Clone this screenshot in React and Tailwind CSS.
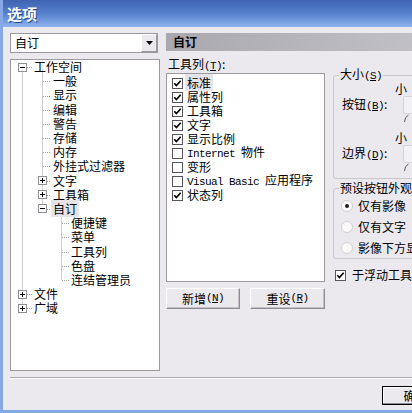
import React from "react";

const cjk = "font-['Noto_Sans_CJK_SC','Liberation_Sans',sans-serif]";
const mono = "font-['Liberation_Mono','Noto_Sans_CJK_SC',monospace] text-[11px] tracking-[-0.6px]";

function Key({ k }) {
    return <span className={mono}>(<span className="underline">{k}</span>)</span>
}

function Check({ on }) {
    return (
        <svg width="11" height="11" viewBox="0 0 11 11" className="shrink-0">
            <rect x="0.5" y="0.5" width="10" height="10" fill="#fff" stroke="#55555b" />
            {on && <path d="M2.3 5.2 L4.4 7.5 L8.7 2.8" fill="none" stroke="#000" strokeWidth="1.7" />}
        </svg>
    )
}

function Radio({ on }) {
    return (
        <svg width="12" height="12" viewBox="0 0 12 12" className="shrink-0">
            <circle cx="6" cy="6" r="5.5" fill="#fafafa" stroke="#cfced3" />
            {on && <circle cx="6" cy="6" r="2" fill="#1e1e1e" />}
        </svg>
    )
}

function Expander({ open }) {
    return (
        <svg width="9" height="9" viewBox="0 0 9 9" className="shrink-0">
            <rect x="0.5" y="0.5" width="8" height="8" fill="#fff" stroke="#8e8f94" />
            <path d="M2 4.5h5" stroke="#000" />
            {!open && <path d="M4.5 2v5" stroke="#000" />}
        </svg>
    )
}

const treeRows = [
    { lv: 0, ex: "open", t: "工作空间" },
    { lv: 1, t: "一般" },
    { lv: 1, t: "显示" },
    { lv: 1, t: "编辑" },
    { lv: 1, t: "警告" },
    { lv: 1, t: "存储" },
    { lv: 1, t: "内存" },
    { lv: 1, t: "外挂式过滤器" },
    { lv: 1, ex: "closed", t: "文字" },
    { lv: 1, ex: "closed", t: "工具箱" },
    { lv: 1, ex: "open", t: "自订", sel: true },
    { lv: 2, t: "便捷键" },
    { lv: 2, t: "菜单" },
    { lv: 2, t: "工具列" },
    { lv: 2, t: "色盘" },
    { lv: 2, t: "连结管理员" },
    { lv: 0, ex: "closed", t: "文件" },
    { lv: 0, ex: "closed", t: "广域" },
]

const ROW = 14.2
const cy = (i) => Math.round(7.1 + ROW * i) + 0.5

// dotted connector lines of the tree
function TreeLines() {
    const dot = { stroke: "#9d9da3", strokeDasharray: "1 1" }
    return (
        <svg className="absolute inset-0 pointer-events-none" width="150" height="312">
            <line x1="11.5" y1={cy(0) + 5} x2="11.5" y2={cy(17) - 5} {...dot} />
            {[0, 16, 17].map(i => <line key={i} x1="16" y1={cy(i)} x2="21" y2={cy(i)} {...dot} />)}
            <line x1="31.5" y1={cy(0) + 3} x2="31.5" y2={cy(10) - 5} {...dot} />
            {[1, 2, 3, 4, 5, 6, 7].map(i => <line key={i} x1="32" y1={cy(i)} x2="40" y2={cy(i)} {...dot} />)}
            {[8, 9, 10].map(i => <line key={i} x1="36" y1={cy(i)} x2="40" y2={cy(i)} {...dot} />)}
            <line x1="50.5" y1={cy(10) + 3} x2="50.5" y2={cy(15)} {...dot} />
            {[11, 12, 13, 14, 15].map(i => <line key={i} x1="51" y1={cy(i)} x2="58" y2={cy(i)} {...dot} />)}
        </svg>
    )
}

function TreeRow({ row }) {
    const label = <span className={`px-[2px] leading-[14px] ${row.sel ? 'bg-[#e4e3e8]' : ''}`}>{row.t}</span>
    if (row.lv === 0) {
        return (
            <div className="h-[14.2px] flex items-center pl-[7px]">
                <Expander open={row.ex === "open"} />
                <div className="ml-[5px]">{label}</div>
            </div>
        )
    }
    if (row.lv === 1 && row.ex) {
        return (
            <div className="h-[14.2px] flex items-center pl-[27px]">
                <Expander open={row.ex === "open"} />
                <div className="ml-[4px]">{label}</div>
            </div>
        )
    }
    return (
        <div className={`h-[14.2px] flex items-center ${row.lv === 1 ? 'pl-[40px]' : 'pl-[58px]'}`}>
            {label}
        </div>
    )
}

const toolbars = [
    { on: true, t: <span className="bg-[#e6e5ea] px-[2px] -ml-[2px]">标准</span> },
    { on: true, t: "属性列" },
    { on: true, t: "工具箱" },
    { on: true, t: "文字" },
    { on: true, t: "显示比例" },
    { on: false, t: <><span className={mono}>Internet </span>物件</> },
    { on: false, t: "变形" },
    { on: false, t: <><span className={mono}>Visual Basic </span>应用程序</> },
    { on: true, t: "状态列" },
]

function Button({ children, className = "" }) {
    return (
        <button className={`h-[21px] w-[74px] bg-[#ebe9ed] border border-t-white border-l-white border-r-[#8d8c92] border-b-[#8d8c92] shadow-[inset_-1px_-1px_0_#c3c2c7] flex items-center justify-center ${className}`}>
            {children}
        </button>
    )
}

function SizeRow({ label }) {
    return (
        <div>
            <div className="ml-[61px] h-[12px] leading-[12px]">小</div>
            <div className="flex items-center h-[18px] mt-[1px]">
                <div className="w-[69px] pl-[8px] whitespace-nowrap">{label}</div>
                <div className="w-[40px] h-[18px] border border-[#d6d5da] bg-[#f2f1f4] rounded-[2px]" />
            </div>
            <svg width="80" height="8" className="ml-[69px] block">
                <path d="M1.5 8 Q1.5 3 5.5 1" fill="none" stroke="#55555a" />
            </svg>
        </div>
    )
}

export default function App() {
    return (
        <div className={`w-[412px] h-[413px] overflow-hidden bg-[#ebe9ed] border-l-[3px] border-b-[3px] border-[#86a9e6] flex flex-col text-[12px] text-black ${cjk}`}>
            {/* title bar */}
            <div className="h-[27px] shrink-0 bg-gradient-to-b from-[#3f63b2] via-[#5680cc] to-[#8db4ee] flex items-center pl-[4px]">
                <span className="text-white font-bold text-[15px] leading-none [text-shadow:1px_1px_0_#2a4a8a]">选项</span>
            </div>

            <div className="flex flex-col pl-[7px]">
                <div className="flex gap-[6px] mt-[6px]">
                    {/* left column */}
                    <div className="w-[150px] shrink-0 flex flex-col">
                        <div className="w-[148px] h-[20px] bg-white border border-[#9a99a0] flex items-center">
                            <span className="flex-1 pl-[4px] leading-[14px]">自订</span>
                            <div className="w-[16px] h-[18px] bg-[#ebe9ed] border border-t-white border-l-white border-r-[#9a99a0] border-b-[#9a99a0] flex items-center justify-center">
                                <svg width="7" height="4" viewBox="0 0 7 4"><path d="M0 0h7L3.5 4z" fill="#000" /></svg>
                            </div>
                        </div>
                        <div className="relative mt-[6px] h-[312px] bg-white border border-[#9a99a0]">
                            <TreeLines />
                            <div className="relative">
                                {treeRows.map((row, i) => <TreeRow key={i} row={row} />)}
                            </div>
                        </div>
                    </div>

                    {/* right column */}
                    <div className="w-[320px] shrink-0 flex flex-col">
                        <div className="h-[18px] bg-gradient-to-r from-[#a9a8ae] to-[#c8c7cd] flex items-center pl-[7px] font-bold">自订</div>
                        <div className="flex gap-[8px] items-start">
                            <div className="w-[159px] shrink-0 flex flex-col">
                                <div className="mt-[5px] h-[16px] leading-[16px] pl-[2px]">工具列<Key k="T" />:</div>
                                <div className="mt-[1px] h-[209px] bg-white border border-[#9a99a0] pt-[2px] pl-[5px]">
                                    {toolbars.map((item, i) => (
                                        <div key={i} className="h-[14px] flex items-center whitespace-nowrap">
                                            <Check on={item.on} />
                                            <span className="ml-[4px] leading-[14px]">{item.t}</span>
                                        </div>
                                    ))}
                                </div>
                                <div className="mt-[6px] flex gap-[10px]">
                                    <Button>新增<Key k="N" /></Button>
                                    <Button className="w-[75px]">重设<Key k="R" /></Button>
                                </div>
                            </div>

                            <div className="w-[140px] shrink-0 flex flex-col mt-[16px]">
                                <fieldset className="h-[112px] border border-[#c9c8cd] rounded-[3px]">
                                    <legend className="ml-[5px] px-[1px] leading-[14px]">大小<Key k="S" /></legend>
                                    <SizeRow label={<>按钮<Key k="B" />:</>} />
                                    <div className="mt-[10px]">
                                        <SizeRow label={<>边界<Key k="D" />:</>} />
                                    </div>
                                </fieldset>
                                <fieldset className="mt-[2px] border border-[#c9c8cd] rounded-[3px]">
                                    <legend className="ml-[5px] px-[1px] leading-[14px] whitespace-nowrap">预设按钮外观</legend>
                                    {["仅有影像", "仅有文字", "影像下方显示文字"].map((t, i) => (
                                        <div key={t} className="h-[21px] flex items-center pl-[7px] whitespace-nowrap">
                                            <Radio on={i === 0} />
                                            <span className="ml-[5px]">{t}</span>
                                        </div>
                                    ))}
                                </fieldset>
                                <div className="mt-[9px] h-[14px] flex items-center pl-[2px] whitespace-nowrap">
                                    <Check on />
                                    <span className="ml-[6px]">于浮动工具列显示标题</span>
                                </div>
                            </div>
                        </div>
                    </div>
                </div>

                {/* separator + dialog buttons */}
                <div className="mt-[6px] h-[2px] border-t border-[#a9a8ad] border-b border-b-white" />
                <div className="mt-[7px] flex gap-[6px] pl-[372px]">
                    <button className="w-[67px] h-[19px] shrink-0 bg-[#ebe9ed] border border-black shadow-[inset_-1px_-1px_0_#8d8c92,inset_1px_1px_0_#fff] flex items-center justify-center leading-none">确定</button>
                </div>
            </div>
        </div>
    )
}
